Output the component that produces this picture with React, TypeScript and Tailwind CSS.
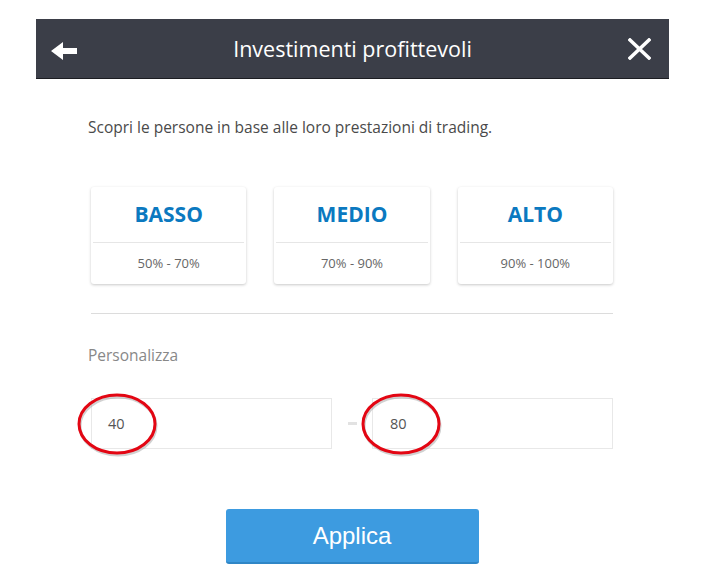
const LIVELLI = [
  { nome: "BASSO", range: "50% - 70%" },
  { nome: "MEDIO", range: "70% - 90%" },
  { nome: "ALTO", range: "90% - 100%" },
];

function Cerchio({ className }: { className: string }) {
  // evidenziazione rossa disegnata a mano sopra il campo
  return (
    <svg
      className={`pointer-events-none absolute ${className}`}
      width="84"
      height="66"
      viewBox="0 0 84 66"
    >
      <ellipse cx="42" cy="34" rx="38" ry="29" fill="none" stroke="#9a9a9a" strokeWidth="3" opacity="0.45" />
      <ellipse cx="41" cy="32" rx="38" ry="29" fill="none" stroke="#e30613" strokeWidth="3" />
    </svg>
  );
}

export default function App() {
  return (
    <div className="w-[704px] h-[588px] bg-white overflow-hidden" style={{ fontFamily: '"Open Sans", sans-serif' }}>
      <header className="ml-[36px] mt-[19px] w-[633px] h-[60px] bg-[#3b3e48] border-b border-[#1c1d22] flex items-center justify-between pl-[15px] pr-[18px]">
        <svg width="26" height="18" viewBox="0 0 26 18" className="mt-[5px]">
          <polygon points="0,9 12,0 12,6 26,6 26,12 12,12 12,18" fill="#ffffff" />
        </svg>
        <h1 className="text-[21.5px] text-white leading-none">Investimenti profittevoli</h1>
        <svg width="23" height="22" viewBox="0 0 23 22" className="mt-[1px]">
          <path d="M2 2 L21 20 M21 2 L2 20" stroke="#ffffff" strokeWidth="3.5" strokeLinecap="square" />
        </svg>
      </header>

      <div className="ml-[91px] w-[522px]">
        <p className="mt-[38px] -ml-[3px] text-[15.5px] leading-[20px] text-[#4a4a4a]">
          Scopri le persone in base alle loro prestazioni di trading.
        </p>

        <div className="mt-[50px] grid grid-cols-3 gap-[28px]">
          {LIVELLI.map((l) => (
            <div
              key={l.nome}
              className="h-[97px] rounded-[3px] bg-white shadow-[0_1px_3px_rgba(0,0,0,0.22)] flex flex-col"
            >
              <div className="h-[56px] mx-[2px] flex items-center justify-center border-b border-[#e6e6e6]">
                <span className="text-[21px] font-bold text-[#0b79c0] leading-none">{l.nome}</span>
              </div>
              <div className="flex-1 flex items-center justify-center">
                <span className="text-[13px] text-[#666]">{l.range}</span>
              </div>
            </div>
          ))}
        </div>

        <div className="mt-[29px] h-px w-[522px] bg-[#dcdcdc]" />

        <p className="mt-[31px] -ml-[3px] text-[15.5px] leading-[20px] text-[#888]">Personalizza</p>

        <div className="mt-[33px] flex items-center">
          <div className="relative w-[241px] h-[51px] border border-[#e8e8e8] flex items-center pl-[16px] text-[14.5px] text-[#555]">
            40
            <Cerchio className="-left-[16px] -top-[7px]" />
          </div>
          <div className="w-[40px] flex justify-center">
            <div className="w-[9px] h-[3px] bg-[#e2e2e2]" />
          </div>
          <div className="relative w-[241px] h-[51px] border border-[#e8e8e8] flex items-center pl-[17px] text-[14.5px] text-[#555]">
            80
            <Cerchio className="-left-[13px] -top-[7px]" />
          </div>
        </div>
      </div>

      <div className="mt-[60px] flex justify-center">
        <button
          className="w-[253px] h-[55px] rounded-[3px] bg-[#3d9be0] border-b-2 border-[#2f86c6] text-white text-[24px]"
          style={{ fontFamily: '"Liberation Sans", Arial, sans-serif' }}
        >
          Applica
        </button>
      </div>
    </div>
  );
}
